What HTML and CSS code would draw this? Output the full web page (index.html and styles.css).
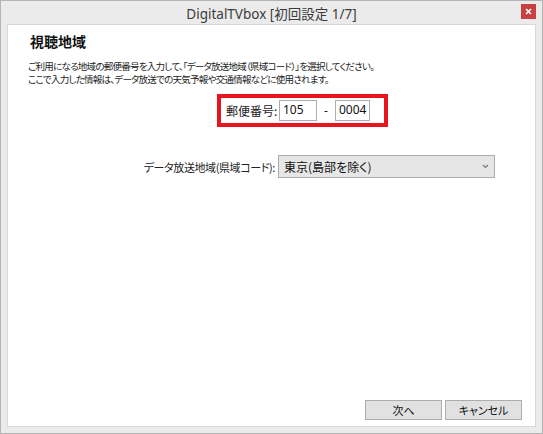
FILE: index.html
```html
<!DOCTYPE html>
<html lang="ja">
<head>
<meta charset="utf-8">
<title>DigitalTVbox</title>
<link rel="stylesheet" href="styles.css">
</head>
<body>
<div class="window">
  <div class="titlebar">
    <div class="title">DigitalTVbox [初回設定 1/7]</div>
    <div class="close"><svg width="7" height="7" viewBox="0 0 7 7"><path d="M1 1L6 6M6 1L1 6" stroke="#fff" stroke-width="1.6"/></svg></div>
  </div>
  <div class="panel">
    <h1 class="heading">視聴地域</h1>
    <p class="desc">ご利用になる地域の郵便番号を入力して、「データ放送地域（県域コード）」を選択してください。<br>ここで入力した情報は、データ放送での天気予報や交通情報などに使用されます。</p>
    <div class="postal">
      <span class="label">郵便番号:</span>
      <span class="input in1">105</span>
      <span class="dash">-</span>
      <span class="input in2">0004</span>
    </div>
    <div class="region">
      <span class="label">データ放送地域(県域コード):</span>
      <div class="select"><span>東京(島部を除く)</span><svg width="7" height="5" viewBox="0 0 7 5"><path d="M1 1L3.5 3.5L6 1" stroke="#777" stroke-width="1.2" fill="none"/></svg></div>
    </div>
    <div class="spacer"></div>
    <div class="buttons">
      <div class="btn">次へ</div>
      <div class="btn">キャンセル</div>
    </div>
  </div>
</div>
</body>
</html>
```
FILE: styles.css
```css
* { box-sizing: border-box; }
html, body { margin: 0; padding: 0; }
body {
  width: 543px; height: 434px; overflow: hidden;
  font-family: "Noto Sans CJK JP", "Noto Sans", sans-serif;
  background: #fff;
}
.window {
  width: 543px; height: 434px;
  background: #ebebeb;
  border: 1px solid #b4b4b4;
  display: flex; flex-direction: column;
}
.titlebar {
  height: 23px; position: relative;
  display: flex; align-items: center; justify-content: center;
}
.title {
  font-family: "Noto Sans", "Noto Sans CJK JP", sans-serif;
  font-size: 13.5px; color: #3c3c3c; margin-top: 1px;
  font-feature-settings: "palt";
}
.close {
  position: absolute; left: 520px; top: 3px;
  width: 15px; height: 15px; background: #c74141;
  display: flex; align-items: center; justify-content: center;
}
.panel {
  flex: 1; margin: 0 6px 6px 6px; background: #fff;
  border: 1px solid #d8d8d8;
  display: flex; flex-direction: column;
}
.heading {
  margin: 6px 0 0 22px; font-size: 14px; font-weight: bold; color: #111;
  line-height: 20px;
}
.desc {
  margin: 9px 0 0 20px; font-size: 9.5px; line-height: 13px; color: #222;
  font-feature-settings: "palt"; letter-spacing: -0.75px;
  white-space: nowrap;
}
.postal {
  margin: 8px 0 0 209px; width: 171px; height: 33px;
  border: 4px solid #e8141e;
  display: flex; align-items: center;
  font-size: 12px; color: #222;
}
.postal .label { margin-left: 5px; width: 53px; font-feature-settings: "palt"; white-space: nowrap; }
.input {
  height: 21px; border: 1px solid #abadb3; background: #fff;
  font-family: "Noto Sans", sans-serif; font-size: 12px;
  padding: 0 0 0 3px; line-height: 18px; color: #111;
}
.in1 { width: 38px; }
.dash { width: 18px; text-align: center; font-family: "Noto Sans", sans-serif; }
.in2 { width: 35px; }
.region {
  margin: 28px 0 0 130px; display: flex; align-items: center;
  font-size: 11px; color: #222;
}
.region .label {
  width: 140px; padding-right: 3px; text-align: right; white-space: nowrap;
  font-feature-settings: "palt"; letter-spacing: -0.4px;
}
.select {
  width: 217px; height: 23px; background: #e6e6e6;
  border: 1px solid #acacac;
  display: flex; align-items: center; justify-content: space-between;
  padding: 0 5px 0 5px; font-feature-settings: "palt";
}
.select span { font-size: 12px; color: #111; }
.spacer { flex: 1; }
.buttons {
  display: flex; justify-content: flex-end; gap: 3px;
  margin: 0 13px 6px 0;
}
.btn {
  width: 77px; height: 20px; background: #e1e1e1;
  border: 1px solid #adadad;
  display: flex; align-items: center; justify-content: center;
  font-size: 11px; color: #111; font-feature-settings: "palt";
}
```
